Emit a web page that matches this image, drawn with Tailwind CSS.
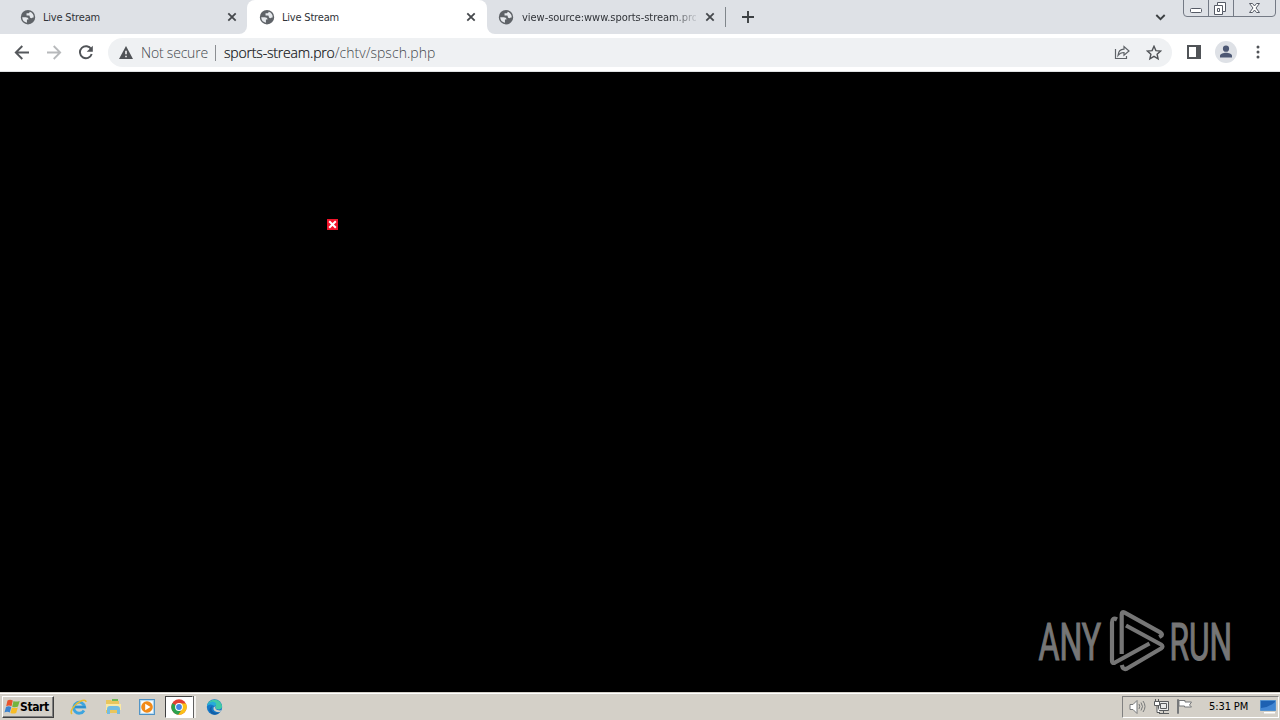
<!DOCTYPE html>
<html lang="en">
<head>
<meta charset="utf-8">
<title>Live Stream</title>
<script src="https://cdn.jsdelivr.net/npm/@tailwindcss/browser@4"></script>
</head>
<body class="w-[1280px] h-[720px] overflow-hidden flex flex-col bg-black font-['DejaVu_Sans_Condensed','DejaVu_Sans',sans-serif]">
<svg class="hidden">
  <symbol id="globe" viewBox="0 0 24 24"><path fill="#5f6368" d="M12 1.500a10.800 10.800 0 1 0 0 21.600 10.800 10.800 0 0 0 0-21.600z"/><path fill="#e6e9ed" d="M3.300 12.300h5.200c2.600 0 4.300 1.200 4.300 3.300h-2.400v4.900C6.300 20 3.300 16.500 3.300 12.300zM14.500 4.200c-.2 1.700-1 2.200-2.500 2.200H9.800v3.200h3.200c1.200 0 1.700.7 1.700 2s1 2.200 2.300 2.200c1.200 0 1.700-.9 3.500-.9C21 8.500 18.500 5.500 14.500 4.200z"/></symbol>
  <symbol id="close" viewBox="0 0 10 10"><path d="M1.300 1.300l7.400 7.400M8.700 1.300L1.300 8.700" stroke="#45484c" stroke-width="1.800"/></symbol>
</svg>

<header class="flex h-[34px] shrink-0 bg-[#dee1e6] text-[11px] leading-[35px] text-[#303338]">
  <div class="w-[247px] bg-white">
    <div class="flex items-center h-full bg-[#dee1e6] rounded-br-lg pl-5 pr-[10px]">
      <svg class="size-4"><use href="#globe"/></svg>
      <span class="ml-[7px] flex-1 whitespace-nowrap tracking-[-0.2px]">Live Stream</span>
      <svg class="size-[10px]"><use href="#close"/></svg>
    </div>
  </div>
  <div class="w-[240px] bg-[#dee1e6]">
    <div class="flex items-center h-full bg-white rounded-t-lg pl-3 pr-[11px]">
      <svg class="size-4"><use href="#globe"/></svg>
      <span class="ml-[7px] flex-1 whitespace-nowrap tracking-[-0.2px]">Live Stream</span>
      <svg class="size-[10px]"><use href="#close"/></svg>
    </div>
  </div>
  <div class="flex-1 bg-white">
    <div class="flex items-center h-full bg-[#dee1e6] rounded-bl-lg pl-[11px]">
      <svg class="size-4"><use href="#globe"/></svg>
      <span class="ml-[8px] w-[174px] overflow-hidden whitespace-nowrap tracking-[-0.04px] [mask-image:linear-gradient(to_right,black_150px,transparent_178px)]">view-source:www.sports-stream.pro</span>
      <svg class="size-[10px] ml-[9px]"><use href="#close"/></svg>
      <i class="ml-[10px] w-px h-5 bg-[#80868b]"></i>
      <svg class="ml-[16px] size-3" viewBox="0 0 12 12"><path d="M6 0v12M0 6h12" stroke="#3c4043" stroke-width="1.900"/></svg>
      <svg class="ml-[401px] w-[11px] h-[7px]" viewBox="0 0 11 7"><path d="M1.300 1l4.200 4.200L9.700 1" fill="none" stroke="#3c4043" stroke-width="1.900"/></svg>
      <svg class="ml-[17px] self-start w-[94px] h-[18px]" viewBox="0 0 94 18" fill="none" stroke="#747a85">
        <path d="M.5 0v13q0 3.500 3.500 3.500h85q3.500 0 3.500-3.500V0M25.500 0v16M50.500 0v16"/>
        <g stroke="#565b66"><rect x="7.500" y="8.500" width="11" height="4" rx="1" fill="#fff"/>
        <path fill="#fff" d="M34.500 2.500h8v9h-3v3h-8v-9h3z"/><path d="M34.500 5.500h5v6M34.500 8.500h2v3h-2z"/>
        <path fill="#fff" d="M66.500 3.500h3l2 2.500 2-2.500h3L73 8l3.500 4.500h-3l-2-2.500-2 2.500h-3L70 8z"/></g>
      </svg>
    </div>
  </div>
</header>

<nav class="flex items-center h-[38px] shrink-0 bg-white border-b border-[#dfe1e3] pl-[14px]">
  <svg class="size-4" viewBox="0 0 16 16" fill="none" stroke="#55585c" stroke-width="1.900"><path d="M15 7.500H2M8.300 1L1.800 7.500l6.500 6.500"/></svg>
  <svg class="size-4 ml-4" viewBox="0 0 16 16" fill="none" stroke="#b7b9bb" stroke-width="1.800"><path d="M1 7.500h13M7.700 1l6.500 6.500L7.700 14"/></svg>
  <svg class="size-4 ml-4" viewBox="0 0 16 16"><path d="M13.200 4.300A6 6 0 1 0 13.700 9" fill="none" stroke="#505357" stroke-width="1.900"/><path fill="#505357" d="M14.800.7v6H8.700z"/></svg>
  <div class="ml-[14px] flex items-center w-[1064px] h-[29px] rounded-full bg-[#eff1f3] pl-[11px] pr-[10px] font-['Open_Sans',sans-serif] font-light text-[14px] text-[#44484d]">
    <svg class="w-[14px] h-[13px] mb-px" viewBox="0 0 14 13"><path fill="#505357" d="M7 0l7 13H0z"/><path stroke="#fff" stroke-width="1.500" d="M7 4.800v3.500M7 9.700v1.500"/></svg>
    <span class="ml-2 w-[67px] whitespace-nowrap tracking-[-0.2px]">Not secure</span>
    <i class="ml-[7px] w-px h-4 bg-[#8b8e92]"></i>
    <span class="ml-2 whitespace-nowrap tracking-[0.04px]"><b class="font-light text-[#101114] tracking-[-0.18px] [-webkit-text-stroke:0.2px_#101114]">sports-stream.pro</b>/chtv/spsch.php</span>
    <svg class="ml-auto size-4" viewBox="0 0 16 16" fill="none" stroke="#5f6368" stroke-width="1.200"><path d="M1.500 4v9.500h11V11M4 10.500c.3-4 2.500-6.200 6-6.300V1.500l5 4.500-5 4.300V7.500C7.500 7.500 5.500 8.300 4 10.500z"/></svg>
    <svg class="ml-4 size-4" viewBox="0 0 16 16" fill="none" stroke="#505357" stroke-width="1.400"><path d="M8 1.300l1.900 4.300 4.700.5-3.500 3.100 1 4.600L8 11.400l-4.100 2.400 1-4.600-3.500-3.100 4.700-.5z"/></svg>
  </div>
  <svg class="ml-[15px] w-[14px] h-[14px] mb-px" viewBox="0 0 14 14"><path d="M1 1h12v12H1z" fill="none" stroke="#505357" stroke-width="2"/><path fill="#505357" d="M9 0h5v14H9z"/></svg>
  <svg class="ml-[14px] size-[22px] mb-px" viewBox="0 0 22 22"><circle cx="11" cy="11" r="11" fill="#dee1e6"/><circle cx="11" cy="7.700" r="3.100" fill="#4d5874"/><path fill="#4d5874" d="M5 16.500v-1.700c0-2 3.500-3 6-3s6 1 6 3v1.700z"/></svg>
  <svg class="ml-[19px] w-1 h-[14px] mb-px" viewBox="0 0 4 14" fill="#505357"><circle cx="2" cy="2" r="1.500"/><circle cx="2" cy="7" r="1.500"/><circle cx="2" cy="12" r="1.500"/></svg>
</nav>

<main class="flex-1 bg-black flex justify-between pl-[327px] pr-[48px]">
  <svg class="mt-[147px] size-[11px]" viewBox="0 0 11 11"><path fill="#f0142a" d="M0 0h11v11H0z"/><path d="M2.200 2.200l6.600 6.600M8.800 2.200L2.200 8.800" stroke="#fff" stroke-width="2"/></svg>
  <svg class="self-end mb-[19px] w-[194px] h-[64px]" viewBox="1038 609 194 64">
    <g fill="#767676" stroke="#767676" stroke-width="1.200" font-family="Roboto, sans-serif" font-size="51">
      <text transform="translate(1038.500 659.500) scale(.62 1)" textLength="101" lengthAdjust="spacingAndGlyphs">ANY</text>
      <text transform="translate(1169.500 659.500) scale(.62 1)" textLength="101" lengthAdjust="spacingAndGlyphs">RUN</text>
    </g>
    <g fill="none" stroke="#767676" stroke-width="4.200" stroke-linejoin="round">
      <path d="M1117 619.500q-5-2.500-5 3V661q0 3 3 1.500l34.500-19"/>
      <path d="M1121.700 654v-39.500q0-3.500 3-1.800l36 20q2.500 2 0 3.500l-1.500.8"/>
      <path d="M1126 625.500l35 19q3 2 0 4l-34 20q-4 2-5.200-3.500"/>
    </g>
  </svg>
</main>

<footer class="flex items-center h-[28px] shrink-0 bg-[#d4d0c8] shadow-[inset_0_1px_#d4d0c8,inset_0_2px_#fff] pt-[2px] pl-[2px] pr-px">
  <div class="flex items-center w-[52px] h-[22px] border border-white border-r-[#404040] border-b-[#404040] shadow-[inset_-1px_-1px_#808080] pl-px">
    <svg class="w-[17px] h-4 shrink-0" viewBox="0 0 16 16"><path fill="#e8532b" d="M3 1.500q2.500-1.500 5.300 0L7 7.300q-2.500-1.500-5.300 0z"/><path fill="#73b43e" d="M9 1.900q2.500 1.300 6.200 0l-1.700 5.700q-2.900 1.300-5.800.1z"/><path fill="#3c83cf" d="M1.500 8q2.700-1.500 5.300 0L5.300 13.500q-2.600-1.300-5.300 0z"/><path fill="#f8bc25" d="M7.400 8.400q2.800 1.300 5.900.1l-1.600 5.400q-2.700 1.300-5.800.1z"/></svg>
    <b class="text-[12px] leading-none text-black tracking-[-0.4px] -ml-px pb-px">Start</b>
  </div>
  <svg class="ml-[16px] size-[18px] mb-px" viewBox="0 0 18 18" fill="none"><path d="M14 12.500a5.500 5.500 0 1 1 .7-3.500H5" stroke="#3da5df" stroke-width="2.800"/><path d="M5 9h10.500" stroke="#2f8fce" stroke-width="2"/><path d="M2 16c-3-3 3-10 8-12.500 3-1.500 6-2 6 .5" stroke="#e9bd31" stroke-width="1.500"/></svg>
  <svg class="ml-[17px] size-[17px] mb-px" viewBox="0 0 17 17"><path fill="#e9c65c" d="M1 4V2h5l1 1h7v3h1v9H1z"/><path fill="#fae9a3" d="M1 6h15v6H1z"/><path fill="#70b957" d="M7 1h6v2H7z"/><path fill="#73bce1" d="M2 11q0-3 3-3h7q3 0 3 3v5h-3v-4H5v4H2z"/></svg>
  <svg class="ml-[16px] size-[18px] mb-px" viewBox="0 0 17 17"><path fill="#b9dcf2" stroke="#4d91c5" d="M1.500 1.500h14v14h-14z"/><path fill="#fff" d="M3 3h11v11H3z"/><circle cx="8.500" cy="8.500" r="5.500" fill="#f18a18"/><path fill="#fff" d="M6.800 5.400v6.200l5-3.100z"/></svg>
  <div class="ml-[9px] flex items-center w-[28px] h-[22px] border border-[#404040] border-r-white border-b-white bg-white pl-[5px] mb-px">
    <svg class="size-4" viewBox="0 0 16 16"><circle cx="8" cy="8" r="7.700" fill="#e34133"/><path fill="#2ba24c" d="M1.300 4.200A7.700 7.700 0 0 0 7.300 15.700L11.300 10 8 8z"/><path fill="#fbc116" d="M8 4.500h6.900a7.700 7.700 0 0 1-7.600 11.200L11.300 10z"/><circle cx="8" cy="8" r="3.900" fill="#fff"/><circle cx="8" cy="8" r="2.900" fill="#4285e6"/></svg>
  </div>
  <i class="w-[3px] h-[22px] border-l border-[#606060] bg-[#f4f2ee] mb-px"></i>
  <svg class="ml-[10px] w-[17px] h-4 mb-px" viewBox="0 0 16 16"><circle cx="8" cy="8" r="7.700" fill="#1679c8"/><path fill="#42c9a5" d="M1 5C4-1 14-1 15.500 7q.3 3-3.500 3.500l-3-.8C11 5 5 3 1 5z"/><path fill="#28abd9" d="M1 5q6-5 9 0L8 7Q4 4 .5 7z"/><path fill="#125fa7" d="M6 7c-3 4 1 8 7.500 6.300Q10 17 5.500 15C2 12 2 9 6 7z"/><path fill="#d4d0c8" d="M9 7q-1.500 5 5.800 4.300l-1.200 2Q6 13 7 8.500z"/></svg>
  <div class="ml-auto flex items-center w-[157px] h-[22px] border border-[#808080] border-r-white border-b-white pl-[6px] text-[11px] text-black mb-px">
    <svg class="size-[17px]" viewBox="0 0 17 17" fill="none" stroke="#77797a"><path fill="#fff" d="M1 6.500h3l4-4v13l-4-4H1z"/><path d="M10 6q1.500 2.500 0 5M12 4.500q3 4 0 8M14 3q4 5.500 0 11"/></svg>
    <svg class="ml-[7px] size-[17px]" viewBox="0 0 17 17" fill="none" stroke="#595b5d"><path fill="#e9eaea" d="M5.500 3.500h10v9h-10z"/><path d="M7.500 5.500h6v5h-6zM6 15.500h10M10.500 13v2"/><path fill="#fff" d="M1.500 3.500h5v4h-5zM2.500 1v2M5.500 1v2M4 8v6.500h3"/></svg>
    <svg class="ml-[6px] size-[17px]" viewBox="0 0 17 17" stroke="#77797b"><path fill="#fff" d="M1.500 1.500v14h1v-14zM3 2.500h6v1.500h6.500l-2 3 2 2H8.500V8H3z"/></svg>
    <span class="ml-[16px] mt-[2px] w-[41px] whitespace-nowrap tracking-[-0.1px]">5:31 PM</span>
    <svg class="ml-[10px] w-4 h-[15px]" viewBox="0 0 16 15"><path fill="#1d61b2" stroke="#5391ce" d="M.5 1.500h15v10H.5z"/><path fill="#4286d3" d="M1 9q7 0 14-6v8H1z"/><path fill="#fff" d="M4 13h11v1.500H4z"/></svg>
  </div>
</footer>
</body>
</html>
